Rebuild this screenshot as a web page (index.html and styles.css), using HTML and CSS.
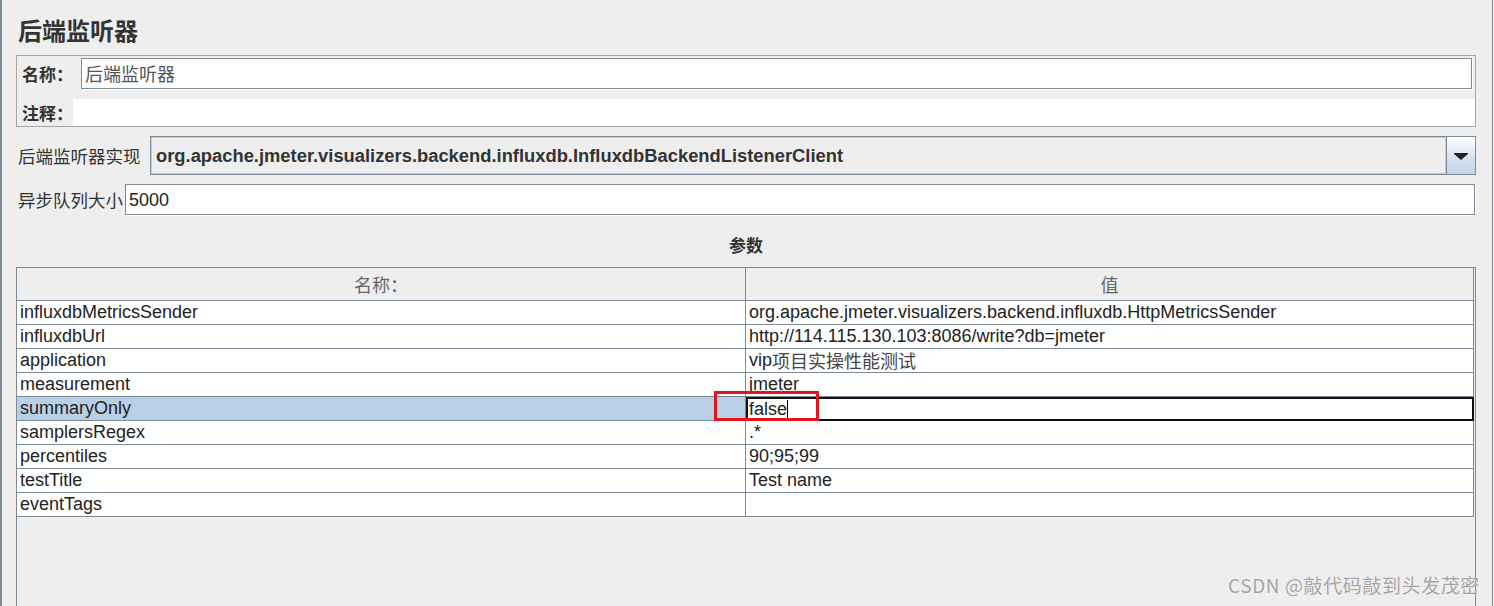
FILE: index.html
```html
<!DOCTYPE html>
<html lang="zh-CN">
<head>
<meta charset="utf-8">
<title>后端监听器</title>
<link rel="stylesheet" href="styles.css">
</head>
<body>
<div class="panel">
  <h1 class="title">后端监听器</h1>
  <div class="namebox">
    <div class="namerow">
      <span class="boxlbl name-lbl">名称：</span>
      <div class="field name-field">后端监听器</div>
    </div>
    <div class="commentrow">
      <span class="boxlbl comment-lbl">注释：</span>
      <div class="comment-field"></div>
    </div>
  </div>
  <div class="implrow">
    <span class="rowlbl impl-lbl">后端监听器实现</span>
    <div class="combo">
      <div class="combo-text">org.apache.jmeter.visualizers.backend.influxdb.InfluxdbBackendListenerClient</div>
      <div class="combo-btn">
        <svg width="14" height="7" viewBox="0 0 14 7"><polygon points="0,0 14,0 14,1 7,7 0,1" fill="#222"/></svg>
      </div>
    </div>
  </div>
  <div class="queuerow">
    <span class="rowlbl queue-lbl">异步队列大小</span>
    <div class="field queue-field">5000</div>
  </div>
  <div class="params-title">参数</div>
  <div class="scrollpane">
    <div class="grid">
      <div class="row head">
        <div class="cell hcell">名称：</div>
        <div class="cell hcell">值</div>
      </div>
      <div class="row"><div class="cell">influxdbMetricsSender</div><div class="cell">org.apache.jmeter.visualizers.backend.influxdb.HttpMetricsSender</div></div>
      <div class="row"><div class="cell">influxdbUrl</div><div class="cell">http://114.115.130.103:8086/write?db=jmeter</div></div>
      <div class="row"><div class="cell">application</div><div class="cell">vip<span class="cjk">项目实操性能测试</span></div></div>
      <div class="row"><div class="cell">measurement</div><div class="cell">jmeter</div></div>
      <div class="row selected"><div class="cell sel">summaryOnly</div><div class="cell editing">false<span class="caret"></span></div></div>
      <div class="row"><div class="cell">samplersRegex</div><div class="cell">.*</div></div>
      <div class="row"><div class="cell">percentiles</div><div class="cell">90;95;99</div></div>
      <div class="row"><div class="cell">testTitle</div><div class="cell">Test name</div></div>
      <div class="row"><div class="cell">eventTags</div><div class="cell"></div></div>
    </div>
  </div>
  <div class="highlight"></div>
  <div class="watermark">CSDN @敲代码敲到头发茂密</div>
</div>
</body>
</html>
```

FILE: styles.css
```css
html, body {
  margin: 0;
  padding: 0;
  background: #eeeeee;
}
body {
  font-family: "Liberation Sans", Arial, "Noto Sans CJK SC", sans-serif;
  color: #222;
}
.panel {
  position: relative;
  box-sizing: border-box;
  width: 1493px;
  height: 606px;
  overflow: hidden;
  border-left: 2px solid #7d8a97;
  border-right: 1px solid #7d8a97;
  padding: 0 16px 0 14px;
}
.title {
  margin: 0;
  height: 55px;
  box-sizing: border-box;
  padding: 17px 0 0 2px;
  font: bold 24px/26px "Noto Sans CJK SC", sans-serif;
  color: #333;
}
.namebox {
  box-sizing: border-box;
  height: 72px;
  border: 1px solid #a6a6a6;
  padding-top: 2px;
}
.namerow {
  display: flex;
  height: 31px;
  align-items: stretch;
}
.boxlbl {
  box-sizing: border-box;
  padding-left: 5px;
  font: bold 17px/31px "Noto Sans CJK SC", sans-serif;
  color: #333;
}
.name-lbl { width: 64px; }
.comment-lbl { width: 56px; line-height: 27px; }
.field {
  flex: 1;
  box-sizing: border-box;
  background: #fff;
  border: 1px solid #7a8a99;
  box-shadow: 1px 1px 0 #fff;
}
.name-field {
  margin-right: 3px;
  padding-left: 3px;
  font: 18px/29px "Noto Sans CJK SC", sans-serif;
  color: #555;
}
.commentrow {
  display: flex;
  height: 27px;
  margin-top: 10px;
}
.comment-field {
  flex: 1;
  background: #fff;
}
.implrow {
  display: flex;
  height: 39px;
  margin-top: 9px;
}
.rowlbl {
  box-sizing: border-box;
  padding-left: 2px;
  font: 17.5px/39px "Noto Sans CJK SC", sans-serif;
  color: #333;
  white-space: nowrap;
}
.impl-lbl { width: 134px; }
.combo {
  flex: 1;
  display: flex;
  box-sizing: border-box;
  border: 1px solid #7a8a99;
  background: #eeeeee;
}
.combo-text {
  flex: 1;
  box-sizing: border-box;
  border: 1px solid #b8cfe5;
  padding-left: 4px;
  font: bold 18.35px/35px "Liberation Sans", Arial, sans-serif;
  color: #333;
  white-space: nowrap;
  overflow: hidden;
}
.combo-btn {
  width: 28px;
  border-left: 1px solid #7a8a99;
  background: linear-gradient(#ffffff, #d4e0ec 60%, #c4d4e6);
  display: flex;
  align-items: center;
  justify-content: center;
}
.combo-btn svg { display: block; margin-top: 2px; }
.queuerow {
  display: flex;
  height: 31px;
  margin-top: 9px;
}
.queue-lbl { width: 109px; line-height: 31px; }
.queue-field {
  margin-right: 1px;
  padding-left: 3px;
  font: 18px/30px "Liberation Sans", Arial, sans-serif;
  color: #222;
}
.params-title {
  height: 52px;
  box-sizing: border-box;
  padding-top: 20px;
  text-align: center;
  font: bold 17px/20px "Noto Sans CJK SC", sans-serif;
  color: #333;
}
.scrollpane {
  box-sizing: border-box;
  height: 360px;
  border: 1px solid #7a8a99;
  background: #eeeeee;
}
.grid {
  width: 1457px;
}
.row {
  display: grid;
  grid-template-columns: 729px 728px;
  height: 24px;
}
.row.head { height: 33px; }
.cell {
  box-sizing: border-box;
  height: 100%;
  border-right: 1px solid #7a8a99;
  border-bottom: 1px solid #7a8a99;
  background: #fff;
  padding-left: 3px;
  font-size: 18px;
  line-height: 23px;
  color: #222;
  white-space: nowrap;
}
.hcell {
  background: #eeeeee;
  text-align: center;
  padding-left: 0;
  font: 18px/32px "Noto Sans CJK SC", sans-serif;
  color: #666;
}
.cjk {
  display: inline-block;
  vertical-align: top;
  font-family: "Noto Sans CJK SC", sans-serif;
  line-height: 22px;
  color: #444;
}
.cell.sel { background: #b8cfe5; }
.cell.editing {
  border: 2px solid #111;
  padding-left: 1px;
  line-height: 20px;
}
.caret {
  display: inline-block;
  width: 1px;
  height: 18px;
  background: #000;
  vertical-align: -3px;
}
.highlight {
  position: absolute;
  left: 712px;
  top: 391px;
  width: 105px;
  height: 30px;
  box-sizing: border-box;
  border: 3px solid #e5131d;
}
.watermark {
  position: absolute;
  left: 1226px;
  top: 572px;
  font: 19px/26px "Noto Sans CJK SC", sans-serif;
  letter-spacing: 0.6px;
  color: #a4a4a4;
  text-shadow: 0 0 1px #ffffff;
  white-space: nowrap;
}
```
